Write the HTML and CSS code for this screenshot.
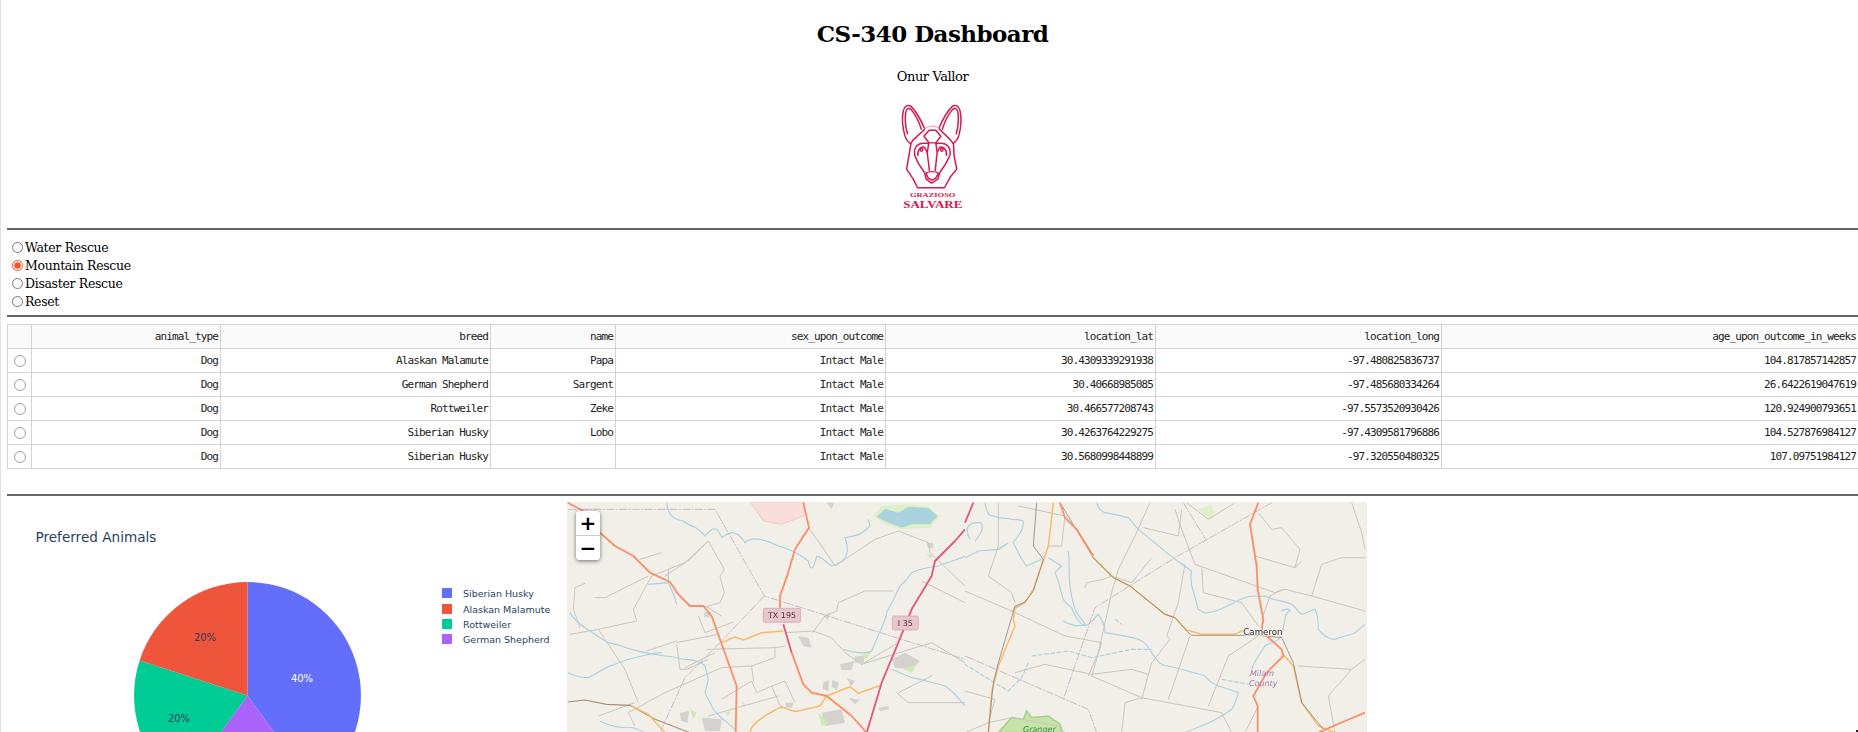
FILE: index.html
```html
<!DOCTYPE html>
<html lang="en">
<head>
<meta charset="utf-8">
<title>CS-340 Dashboard</title>
<link rel="stylesheet" href="styles.css">
</head>
<body>
<main class="page">
  <header class="masthead">
    <h1 class="title">CS-340 Dashboard</h1>
    <p class="author">Onur Vallor</p>
    <svg class="logo" viewBox="56 305 320 340" role="img" aria-label="Grazioso Salvare">
      <g class="logo-line">
        <path d="M133 410C126 385 124 355 128 335C131 320 143 314 152 322C168 338 183 366 193 390"/>
        <path d="M295 410C302 385 303 355 299 335C296 320 284 314 275 322C259 338 244 366 235 388"/>
        <path d="M141 405C133 380 133 350 136 337C139 326 146 325 152 331C166 348 176 368 183 392"/>
        <path d="M287 405C295 380 295 350 292 337C289 326 282 325 276 331C262 348 252 368 245 392"/>
        <path class="logo-pale" d="M193 388Q214 374 235 386"/>
        <path d="M133 410Q138 426 151 434L145 470L138 510L158 540L171 566H252L270 533L289 510L281 470L279 432Q291 424 295 410"/>
        <path d="M193 390L158 422L150 434M235 388L270 422L279 434"/>
        <path d="M190 411L206 393H226L241 411L226 431H206Z"/>
        <path d="M163 470C158 445 170 432 190 432H205M268 470C273 445 260 432 240 432H226"/>
        <path d="M172 470C170 452 180 442 192 444L200 460L207 515M258 470C260 452 250 442 238 444L230 460L224 515"/>
        <path d="M163 470L175 495L192 520M268 470L255 495L238 520"/>
        <path d="M205 431L200 460M226 431L230 460"/>
        <circle cx="183" cy="452" r="4"/>
        <circle cx="244" cy="452" r="4"/>
        <path d="M192 520L197 540L213 552L232 540L238 520"/>
        <path d="M196 522C205 516 225 516 234 522L226 537L214 543L203 537Z"/>
      </g>
      <text class="logo-small" x="148" y="593" textLength="137" lengthAdjust="spacingAndGlyphs">GRAZIOSO</text>
      <text class="logo-big" x="128" y="628" textLength="178" lengthAdjust="spacingAndGlyphs">SALVARE</text>
    </svg>
  </header>

  <hr class="rule">

  <form class="filters">
    <label class="filter"><input type="radio" name="rescue">Water Rescue</label>
    <label class="filter"><input type="radio" name="rescue" checked>Mountain Rescue</label>
    <label class="filter"><input type="radio" name="rescue">Disaster Rescue</label>
    <label class="filter"><input type="radio" name="rescue">Reset</label>
  </form>

  <hr class="rule">

  <table class="grid">
    <colgroup>
      <col class="c-sel"><col class="c-type"><col class="c-breed"><col class="c-name"><col class="c-sex"><col class="c-lat"><col class="c-long"><col class="c-age">
    </colgroup>
    <thead>
      <tr><th></th><th>animal_type</th><th>breed</th><th>name</th><th>sex_upon_outcome</th><th>location_lat</th><th>location_long</th><th>age_upon_outcome_in_weeks</th></tr>
    </thead>
    <tbody>
      <tr><td class="sel"><input type="radio" name="row"></td><td>Dog</td><td>Alaskan Malamute</td><td>Papa</td><td>Intact Male</td><td>30.4309339291938</td><td>-97.480825836737</td><td>104.817857142857</td></tr>
      <tr><td class="sel"><input type="radio" name="row"></td><td>Dog</td><td>German Shepherd</td><td>Sargent</td><td>Intact Male</td><td>30.40668985085</td><td>-97.485680334264</td><td>26.6422619047619</td></tr>
      <tr><td class="sel"><input type="radio" name="row"></td><td>Dog</td><td>Rottweiler</td><td>Zeke</td><td>Intact Male</td><td>30.466577208743</td><td>-97.5573520930426</td><td>120.924900793651</td></tr>
      <tr><td class="sel"><input type="radio" name="row"></td><td>Dog</td><td>Siberian Husky</td><td>Lobo</td><td>Intact Male</td><td>30.4263764229275</td><td>-97.4309581796886</td><td>104.527876984127</td></tr>
      <tr><td class="sel"><input type="radio" name="row"></td><td>Dog</td><td>Siberian Husky</td><td></td><td>Intact Male</td><td>30.5680998448899</td><td>-97.320550480325</td><td>107.09751984127</td></tr>
    </tbody>
  </table>

  <hr class="rule rule-low">

  <section class="charts">
    <svg class="pie" viewBox="0 0 560 231" role="img" aria-label="Preferred Animals">
      <text class="pie-title" x="28.5" y="40">Preferred Animals</text>
      <g class="slices">
        <path class="s-blue" d="M240.5 193.5V80A113.5 113.5 0 0 1 307.2 285.3L240.5 193.5Z"/>
        <path class="s-purple" d="M240.5 193.5L307.2 285.3A113.5 113.5 0 0 1 173.8 285.3Z"/>
        <path class="s-green" d="M240.5 193.5L173.8 285.3A113.5 113.5 0 0 1 132.6 158.4Z"/>
        <path class="s-red" d="M240.5 193.5L132.6 158.4A113.5 113.5 0 0 1 240.5 80Z"/>
      </g>
      <text class="pct pct-light" x="295" y="180">40%</text>
      <text class="pct" x="198" y="139">20%</text>
      <text class="pct" x="172" y="220">20%</text>
      <g class="legend">
        <rect class="s-blue" x="435" y="86" width="10" height="10"/><text x="456" y="95">Siberian Husky</text>
        <rect class="s-red" x="435" y="102" width="10" height="10"/><text x="456" y="111">Alaskan Malamute</text>
        <rect class="s-green" x="435" y="117" width="10" height="10"/><text x="456" y="126">Rottweiler</text>
        <rect class="s-purple" x="435" y="132" width="10" height="10"/><text x="456" y="141">German Shepherd</text>
      </g>
    </svg>

    <div class="map">
      <svg class="tiles" viewBox="0 0 800 231" aria-label="Map of central Texas">
        <g transform="translate(-2 -6) scale(.33333)">
          <path class="m-res" d="M555 18H720L715 60L650 85L595 75L575 45Z"/>
          <path class="m-park" d="M925 60L950 30L1030 25L1090 30L1125 62L1095 95L1010 100L960 85Z"/>
          <path class="m-lake" d="M935 62L960 38L1000 50L1030 32L1090 36L1118 60L1095 85L1040 85L1010 95L960 76Z"/>
          <g class="m-urban">
            <path d="M700 420L730 425L740 455L715 450Z"/><path d="M868 482L900 478L895 500L870 500Z"/><path d="M825 505L868 495L860 522L830 522Z"/><path d="M775 560L792 552L790 585L772 578Z"/><path d="M802 552L822 560L815 582L800 572Z"/><path d="M845 545L870 555L858 572Z"/><path d="M980 490L1020 470L1065 495L1040 520L990 515Z"/><path d="M418 348H438L432 364H418Z"/><path d="M778 360L795 350L788 372Z"/><path d="M345 650L372 645L368 680L348 675Z"/><path d="M410 665L470 670L465 705L420 705Z"/><path d="M770 650L830 640L840 680L780 690Z"/><path d="M1085 140H1105V155H1088Z"/><path d="M785 20H808L800 40Z"/><path d="M850 605L885 612L870 625Z"/><path d="M940 635L970 630L972 640L945 645Z"/><path d="M660 620H685L680 635H665Z"/>
          </g>
          <g class="m-green">
            <path d="M1015 520L1055 505L1040 530Z"/><path d="M375 640L395 650L385 670Z"/><path d="M530 615L545 630H535Z"/><path d="M890 475L920 465L905 490Z"/><path d="M760 650L790 680L770 690Z"/><path d="M480 650L495 645L490 660Z"/><path d="M725 585L745 600L730 595Z"/><path d="M1085 175L1105 178L1095 188Z"/>
          </g>
          <path class="m-road" d="M430 135L375 190L300 240M430 135L478 220L465 240L478 290L465 320L415 335M430 135L360 200L260 240L205 340L215 375L100 400L15 415M100 400L180 520L220 620M290 170L225 190M90 305L120 305L250 240M60 262L30 275L25 340L45 395M400 360L420 410L505 378M335 445L345 520L365 520L430 490M335 440L460 415M245 465L335 435M425 460L630 455L660 450M360 515L450 470M470 610L560 555L575 590L620 570L660 555M560 510L565 555M560 510L630 485L630 455M743 410L780 360L815 345L820 320L900 285L985 285M660 410L745 405L800 425L840 470L890 505L1100 440L1200 500M995 590L1030 620L1200 620M210 690L190 650L300 590L470 515L560 510M430 660L640 600M730 95L770 150L810 210L930 130L1000 105L1090 140L1095 170L1200 270M1070 255L1200 320M420 330L470 360M660 555L690 620M620 570L650 640M1000 590L1100 540M100 660L210 620M890 505L1000 440"/>
          <g class="m-water">
            <path d="M305 20C310 60 325 70 355 75C375 95 395 85 420 120C440 95 455 85 470 125C490 110 510 95 540 140C560 120 600 130 640 150C670 160 690 165 730 195C735 225 745 225 755 180C775 185 790 205 800 210C835 200 860 180 840 125C860 120 880 125 915 90L910 70"/>
            <path d="M1200 180C1170 195 1140 200 1120 210C1080 215 1050 225 1040 230C1020 260 1010 265 1005 270C990 300 985 315 975 330C960 350 965 365 960 370C940 420 930 440 920 465C900 475 860 470 835 460"/>
            <path d="M15 350C30 375 45 385 60 395C85 410 110 430 130 440C160 445 180 455 200 460C235 470 270 475 300 480C325 480 345 490 360 490C390 490 410 500 420 510L430 550L420 590C430 610 440 630 445 640C470 670 495 685 510 700"/>
            <path d="M8 530C30 540 50 545 70 545C100 530 125 510 150 505C180 490 210 485 230 480C250 475 270 470 290 470"/>
            <path d="M250 265L310 260L310 220M310 260C320 280 330 305 335 325"/>
            <path d="M1200 630C1170 590 1155 580 1140 570C1100 560 1070 550 1040 545L980 520"/>
            <path d="M105 675C130 690 150 690 170 695C200 690 220 700 240 710"/>
          </g>
          <path class="m-border" d="M10 40H450L598 300L1200 490M598 300L465 440L360 545L285 710"/>
          <path class="m-rail" d="M8 618L60 612L125 625L195 628L270 670L375 710"/>
          <path class="m-sec" d="M470 440L510 423L535 432L590 410L655 405M785 600L855 572L880 592L948 568M555 710C558 690 575 670 650 632C670 640 690 650 700 645L765 630L785 600M200 630L250 655L300 710"/>
          <path class="m-prim" d="M8 20L55 45M105 110L150 150L205 180L255 230L315 258L340 295L375 330H415L440 360L515 570L512 710M715 20L732 95L690 160L668 235L645 300V340M680 470L715 565L740 590L785 600L860 660L905 710"/>
          <path class="m-motor" d="M655 385L680 470M1200 100L1170 135L1110 195L1100 240L1040 340L1000 440L950 560L905 710"/>
          <rect class="m-shield" x="595" y="337" width="112" height="42" rx="5"/>
          <text class="m-shield-text" x="651" y="367">TX 195</text>
          <rect class="m-shield" x="982" y="360" width="78" height="42" rx="5"/>
          <text class="m-shield-text" x="1021" y="390">I 35</text>
        </g>
        <g transform="translate(398 -6) scale(.33333)">
          <path class="m-park" d="M700 40L740 25L750 60L735 70Z"/>
          <path class="m-gpark" d="M100 710L140 665L175 670L185 645L200 665L250 660L285 685L292 710Z"/>
          <path class="m-road" d="M555 20L510 120L460 220L440 290L400 470L370 540M630 40L650 100L690 205L930 290L960 280L1040 300L1200 345M0 285L140 345L300 420L410 440L380 540L530 605L770 650L800 710M660 205L640 320L605 420L615 430L560 500L530 610M675 420L610 610M1200 185L1130 185L1070 205L1040 300M1010 195L990 215L870 180M880 50L920 100L950 95L1005 160L990 215M1160 20L1190 110L1200 160M360 275L365 260L415 250L440 240L500 260L560 185M535 95L640 120L650 40M140 345L180 320M100 20L100 150L70 240L140 290L150 320M160 30L300 60L290 150L250 150M710 210L715 290L830 320L880 390M890 370L915 300L950 280M880 420L790 480L730 630M150 530L240 505L380 535L500 520L550 535M0 585L90 610L70 680L0 710M70 680L140 665L280 690L300 710M470 710L480 620L530 605M1000 510L1160 520L1200 490M1160 520L1090 600L1110 710M840 710L880 630M665 20L730 70L810 20"/>
          <g class="m-water">
            <path d="M60 20C65 50 70 60 85 60C110 70 125 65 140 70C165 70 180 75 175 80C175 95 170 105 145 140C160 170 170 195 185 210L230 190"/>
            <path d="M0 185L40 165L100 160L130 140M15 130C5 110 5 95 10 90C25 75 50 80 50 85C55 100 50 110 30 135"/>
            <path d="M395 20C400 40 410 45 420 50C450 55 470 60 490 65L520 100L630 190L680 225C675 245 680 255 680 270C690 300 695 325 700 340C715 350 720 352 730 350C770 345 800 320 840 305C860 295 880 305 900 300C930 315 960 315 980 325C995 335 1000 350 1010 355C1030 350 1040 340 1050 340C1060 360 1060 380 1060 400C1080 425 1095 430 1110 430C1130 420 1150 420 1170 410L1200 385"/>
            <path d="M950 345C960 335 975 340 975 345C965 350 960 360 960 370L950 420C930 445 910 440 900 450C880 480 865 500 860 520"/>
            <path d="M310 165C315 200 310 240 315 270C320 310 325 330 335 350C345 365 355 375 360 385C340 395 310 385 295 375"/>
            <path d="M250 185L290 210L270 230C285 260 285 285 295 310C305 325 315 330 320 335C325 355 345 385 360 390C385 380 390 360 400 355C410 370 420 390 420 410C450 415 490 420 520 430C545 440 550 455 560 470C580 500 590 510 610 510C650 520 690 530 720 540C735 560 745 565 760 570C785 575 800 585 820 590C815 610 810 625 800 640C785 650 780 655 770 660C720 690 690 695 660 710"/>
            <path class="m-water-dash" d="M200 480L310 465L380 485L500 460L560 460M190 500L170 545L130 585L80 555L0 505M450 370L470 385M770 550L850 565"/>
          </g>
          <path class="m-border" d="M920 20L630 185L390 335L295 610M0 480L370 640L395 710M655 20L725 135"/>
          <path class="m-sec" d="M265 20L250 150L205 280L180 320L150 335L145 370L150 390L100 510L80 590L70 710M385 185L445 245L495 270L600 355L630 365L665 402L710 415H810L840 400M950 470L985 510L1010 620L1060 690L1110 710"/>
          <path class="m-rail2" d="M215 20L205 150L235 190L205 285L180 318L150 330L100 500L85 560L70 710M285 20L385 185L445 245L495 270L600 355L630 365L665 405L680 418H880L950 425L985 500L1010 620L1075 700"/>
          <path class="m-prim" d="M285 20L300 65L335 100L385 180M880 20L855 85L875 210L878 280L895 370L890 400L905 420L950 460L955 480L905 530L865 600L878 630V710M1060 710L1140 675L1200 650"/>
          <path class="m-motor" d="M25 20L0 80"/>
          <text class="m-town" x="835" y="416">Cameron</text>
          <text class="m-county" x="855" y="541">Milam</text>
          <text class="m-county" x="852" y="570">County</text>
          <text class="m-peak" x="174" y="709">Granger</text>
        </g>
      </svg>
      <div class="zoom">
        <button class="zoom-btn" type="button">+</button>
        <button class="zoom-btn" type="button">−</button>
      </div>
    </div>
  </section>
</main>
</body>
</html>
```
FILE: styles.css
```css
html, body {
  margin: 0;
  height: 732px;
  overflow: hidden;
  background: #fff;
}
body {
  border-left: 1px solid #e2e2e2;
  color: #000;
  font-family: "DejaVu Serif", serif;
}
body::after {
  content: "";
  position: absolute;
  top: 730px;
  left: 1856px;
  width: 2px;
  height: 2px;
  background: #222;
}
.page {
  padding-left: 6px;
  width: 1851px;
}
.masthead {
  display: flex;
  flex-direction: column;
  align-items: center;
  height: 228px;
}
.title {
  margin: 0;
  padding-top: 18px;
  font-size: 23px;
  letter-spacing: -0.55px;
  line-height: 32px;
  font-weight: 700;
}
.author {
  margin: 0;
  padding-top: 18px;
  font-size: 13px;
  letter-spacing: -0.4px;
  line-height: 18px;
}
.logo {
  width: 107px;
  height: 113px;
  margin-top: 15px;
  flex: none;
}
.logo-line {
  fill: none;
  stroke: #d6174f;
  stroke-width: 4.5;
  stroke-linejoin: round;
}
.logo-pale { stroke: #f0b5c8; }
.logo-small {
  fill: #d6174f;
  font: 700 17px "Liberation Serif", serif;
}
.logo-big {
  fill: #d6174f;
  font: 700 32px "Liberation Serif", serif;
}
.rule {
  height: 2px;
  margin: 0;
  border: 0;
  background: #666;
}
.filters {
  display: flex;
  flex-direction: column;
  padding: 8px 0 5px 5px;
}
.filter {
  display: flex;
  align-items: center;
  height: 18px;
  font-size: 12.5px;
  letter-spacing: -0.32px;
}
.filter input {
  width: 11px;
  height: 11px;
  margin: 0 2px 0 0;
  accent-color: #f0592b;
}
.grid {
  width: 1851px;
  margin-top: 7px;
  border-collapse: collapse;
  table-layout: fixed;
  font: 11px "DejaVu Sans Mono", monospace;
  letter-spacing: -0.87px;
  color: #222;
}
.c-sel { width: 24px; }
.c-type { width: 189px; }
.c-breed { width: 270px; }
.c-name { width: 125px; }
.c-sex { width: 270px; }
.c-lat { width: 270px; }
.c-long { width: 286px; }
.c-age { width: 417px; }
.grid th, .grid td {
  height: 23px;
  padding: 0 2px 0 0;
  border: 1px solid #d3d3d3;
  text-align: right;
  font-weight: 400;
}
.grid th { background: #fafafa; }
.grid .sel { text-align: center; padding: 0; }
.sel input {
  width: 12px;
  height: 12px;
  margin: 3px 0 0;
  display: inline-block;
  opacity: .7;
}
.rule-low { margin-top: 25px; }
.charts {
  display: flex;
  margin-top: 6px;
  height: 231px;
}
.pie {
  width: 560px;
  height: 231px;
  flex: none;
  font-family: "DejaVu Sans", sans-serif;
}
.pie-title {
  font-size: 13.6px;
  fill: #2a3f5f;
}
.s-blue { fill: #636efa; }
.s-red { fill: #ef553b; }
.s-green { fill: #00cc96; }
.s-purple { fill: #ab63fa; }
.pct {
  font-size: 10px;
  fill: #2a3f5f;
  text-anchor: middle;
}
.pct-light { fill: #fff; }
.legend text {
  font-size: 9.5px;
  fill: #2a3f5f;
}
.map {
  position: relative;
  width: 800px;
  height: 231px;
  flex: none;
  overflow: hidden;
  background: #f2efe9;
}
.tiles {
  display: block;
  width: 800px;
  height: 231px;
  filter: blur(.4px);
}
.tiles path { fill: none; }
.tiles .m-res { fill: #f8dfdb; stroke: #f2b9b0; stroke-width: 2; }
.tiles .m-park { fill: #dff0c8; }
.tiles .m-lake { fill: #aad3df; }
.tiles .m-gpark { fill: #c7e3a8; stroke: #a5d28f; stroke-width: 5; }
.tiles .m-urban path { fill: #d4d2ce; }
.tiles .m-green path { fill: #cdebb0; }
.tiles .m-road { stroke: #c8c5bf; stroke-width: 3; stroke-linejoin: round; }
.m-water path {
  stroke: #a9d2e2;
  stroke-width: 3.4;
}
.m-water .m-water-dash { stroke-dasharray: 14 5; }
.tiles .m-border {
  stroke: #cdb8cd;
  stroke-width: 3;
  stroke-dasharray: 24 4 6 4;
}
.tiles .m-rail { stroke: #a58f73; stroke-width: 3.4; }
.tiles .m-rail2 { stroke: #8a8378; stroke-width: 2.4; stroke-linejoin: round; }
.tiles .m-sec { stroke: #f7bc6d; stroke-width: 4.6; stroke-linejoin: round; }
.tiles .m-prim { stroke: #fb8d68; stroke-width: 5.4; stroke-linejoin: round; }
.tiles .m-motor { stroke: #e2577c; stroke-width: 5.4; stroke-linejoin: round; }
.m-shield { fill: #e8c6cd; stroke: #d9a7b3; stroke-width: 2.4; }
.m-shield-text {
  font: 24px "DejaVu Sans", sans-serif;
  fill: #5e2c40;
  text-anchor: middle;
}
.m-town {
  font: 26px "DejaVu Sans", sans-serif;
  fill: #333;
  stroke: #f2efe9;
  stroke-width: 5;
  paint-order: stroke;
}
.m-county {
  font: italic 24px "DejaVu Sans", sans-serif;
  fill: #a27ca8;
}
.m-peak {
  font: italic 24px "DejaVu Sans", sans-serif;
  fill: #2d8f3c;
}
.zoom {
  position: absolute;
  top: 9px;
  left: 9px;
  display: flex;
  flex-direction: column;
  width: 24px;
  border-radius: 4px;
  box-shadow: 0 1px 4px rgba(0, 0, 0, .55);
  overflow: hidden;
}
.zoom-btn {
  width: 24px;
  height: 24.5px;
  padding: 0;
  border: 0;
  border-bottom: 1px solid #ccc;
  background: #fff;
  color: #000;
  font: 700 20px/22px "DejaVu Sans", sans-serif;
}
.zoom-btn:last-child { border-bottom: 0; }
```
